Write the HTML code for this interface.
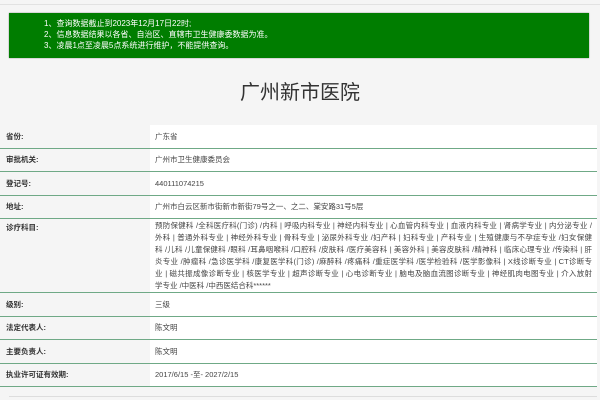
<!DOCTYPE html><html><head><meta charset="utf-8"><style>
body{margin:0;background:#f5f5f5;font-family:"Liberation Sans","Noto Sans CJK SC",sans-serif;width:600px;height:400px;overflow:hidden;position:relative}
.top{position:absolute;left:0;right:0;top:4px;border-top:1px solid #e2e2e2}
.g{position:absolute;left:9px;top:13px;width:580px;height:45px;background:#007d00;color:#fff;font-size:8px;line-height:11px;box-sizing:border-box;padding:5px 0 0 35px;box-shadow:0 0 1px #666}
h1{position:absolute;top:79px;left:0;width:600px;text-align:center;margin:0;font-size:20px;font-weight:normal;color:#333;line-height:28px}
.t{position:absolute;left:0;top:125px;width:597px}
.r{display:flex;border-bottom:1.5px solid #6fa986;font-size:7.5px;color:#444}
.l{width:150px;background:#f5f5f5;padding:0 6px;box-sizing:border-box;display:flex;align-items:center;font-weight:bold;color:#333}
.v{flex:1;background:#fff;padding:0 5px 0 5px;display:flex;align-items:center}
.d .l{align-items:flex-start;padding-top:3px}
.d .v{display:block;line-height:12px;padding-top:1px}
.d .v div{white-space:nowrap;text-align:justify;text-align-last:justify;overflow:hidden}
.d .v div.e{text-align-last:left}
.bot{position:absolute;left:9px;right:3px;top:396px;border-top:1px solid #ddd}
</style></head><body>
<div class="top"></div>
<div class="g">1、查询数据截止到2023年12月17日22时;<br>2、信息数据结果以各省、自治区、直辖市卫生健康委数据为准。<br>3、凌晨1点至凌晨5点系统进行维护，不能提供查询。</div>
<h1>广州新市医院</h1>
<div class="t">
<div class="r" style="height:22.5px"><div class="l">省份:</div><div class="v">广东省</div></div>
<div class="r" style="height:22.5px"><div class="l">审批机关:</div><div class="v">广州市卫生健康委员会</div></div>
<div class="r" style="height:22.5px"><div class="l">登记号:</div><div class="v">440111074215</div></div>
<div class="r" style="height:22.5px"><div class="l">地址:</div><div class="v">广州市白云区新市街新市新街79号之一、之二、棠安路31号5层</div></div>
<div class="r d" style="height:72.5px"><div class="l">诊疗科目:</div><div class="v">
<div>预防保健科 /全科医疗科(门诊) /内科 | 呼吸内科专业 | 神经内科专业 | 心血管内科专业 | 血液内科专业 | 肾病学专业 | 内分泌专业 /</div>
<div>外科 | 普通外科专业 | 神经外科专业 | 骨科专业 | 泌尿外科专业 /妇产科 | 妇科专业 | 产科专业 | 生殖健康与不孕症专业 /妇女保健</div>
<div>科 /儿科 /儿童保健科 /眼科 /耳鼻咽喉科 /口腔科 /皮肤科 /医疗美容科 | 美容外科 | 美容皮肤科 /精神科 | 临床心理专业 /传染科 | 肝</div>
<div>炎专业 /肿瘤科 /急诊医学科 /康复医学科(门诊) /麻醉科 /疼痛科 /重症医学科 /医学检验科 /医学影像科 | X线诊断专业 | CT诊断专</div>
<div>业 | 磁共振成像诊断专业 | 核医学专业 | 超声诊断专业 | 心电诊断专业 | 脑电及脑血流图诊断专业 | 神经肌肉电图专业 | 介入放射</div>
<div class="e">学专业 /中医科 /中西医结合科******</div>
</div></div>
<div class="r" style="height:23px"><div class="l">级别:</div><div class="v">三级</div></div>
<div class="r" style="height:22.5px"><div class="l">法定代表人:</div><div class="v">陈文明</div></div>
<div class="r" style="height:22.5px"><div class="l">主要负责人:</div><div class="v">陈文明</div></div>
<div class="r" style="height:22.5px"><div class="l">执业许可证有效期:</div><div class="v">2017/6/15 -至- 2027/2/15</div></div>
</div>
<div class="bot"></div>
</body></html>
